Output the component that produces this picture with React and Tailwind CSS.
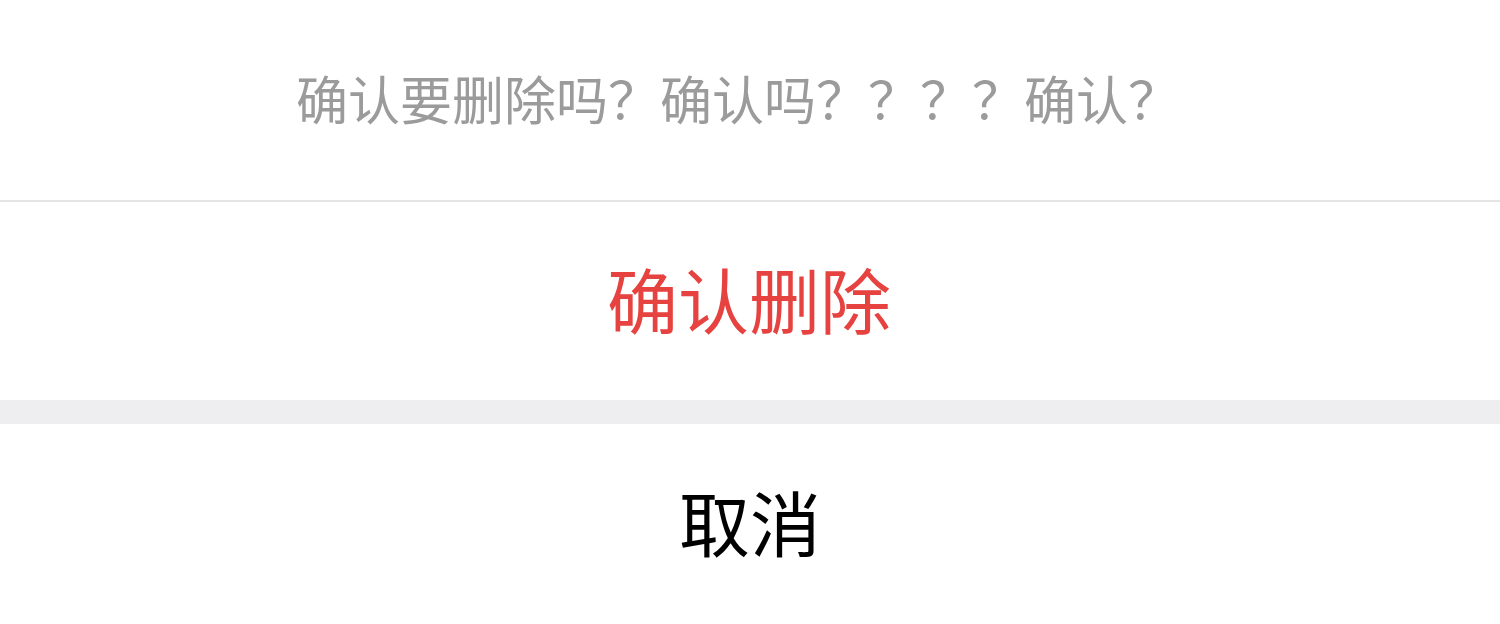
export default function App() {
  const font = { fontFamily: '"Noto Sans CJK SC", "Noto Sans", sans-serif' };
  return (
    <div className="w-[1500px] h-[624px] bg-white flex flex-col" style={font}>
      <div className="h-[202px] flex items-center justify-center border-b-2 border-[#e5e5e5] text-[52px] leading-none text-[#9b9b9b] pr-[24px] pb-[4px]">
        确认要删除吗？确认吗？？？？确认？
      </div>
      <div className="h-[198px] flex items-center justify-center text-[71px] leading-none text-[#e64340] pr-[2px] pb-[8px]">
        确认删除
      </div>
      <div className="h-[24px] bg-[#eeeef0]" />
      <div className="h-[200px] flex items-center justify-center text-[71px] leading-none text-black pb-[8px]">
        取消
      </div>
    </div>
  );
}
